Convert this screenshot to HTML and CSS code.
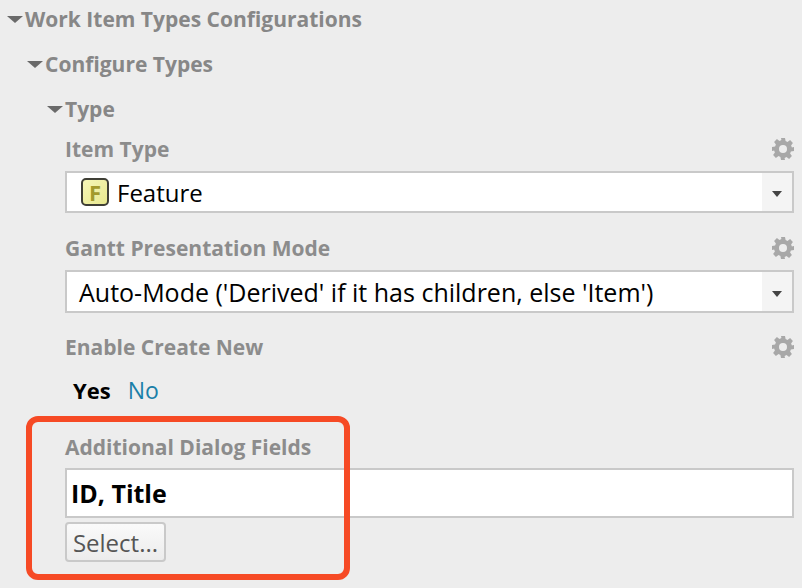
FILE: index.html
```html
<!DOCTYPE html>
<html>

<head>
    <title>Work Item Types Configurations</title>
    <link rel="stylesheet" href="styles.css">
</head>

<body>
    <div class="panel">
        <div class="section level-1"><span class="arrow"></span>Work Item Types Configurations</div>
        <div class="section level-2"><span class="arrow"></span>Configure Types</div>
        <div class="section level-3"><span class="arrow"></span>Type</div>

        <div class="fields">
            <div class="field-head item-head">
                <span class="field-label">Item Type</span>
                <svg class="gear" viewBox="0 0 24 24"><path fill-rule="evenodd" d="M10 1h4l.6 3.1 1.9.8 2.6-1.8 2.8 2.8-1.8 2.6.8 1.9L23 10v4l-3.1.6-.8 1.9 1.8 2.6-2.8 2.8-2.6-1.8-1.9.8L14 23h-4l-.6-3.1-1.9-.8-2.6 1.8-2.8-2.8 1.8-2.6-.8-1.9L1 14v-4l3.1-.6.8-1.9-1.8-2.6 2.8-2.8 2.6 1.8 1.9-.8zM12 8a4 4 0 1 0 0 8 4 4 0 0 0 0-8z"/></svg>
            </div>
            <div class="select item-select">
                <div class="select-value">
                    <span class="type-icon">F</span>
                    <span>Feature</span>
                </div>
                <div class="select-btn"><span class="select-arrow"></span></div>
            </div>

            <div class="field-head gantt-head">
                <span class="field-label">Gantt Presentation Mode</span>
                <svg class="gear" viewBox="0 0 24 24"><path fill-rule="evenodd" d="M10 1h4l.6 3.1 1.9.8 2.6-1.8 2.8 2.8-1.8 2.6.8 1.9L23 10v4l-3.1.6-.8 1.9 1.8 2.6-2.8 2.8-2.6-1.8-1.9.8L14 23h-4l-.6-3.1-1.9-.8-2.6 1.8-2.8-2.8 1.8-2.6-.8-1.9L1 14v-4l3.1-.6.8-1.9-1.8-2.6 2.8-2.8 2.6 1.8 1.9-.8zM12 8a4 4 0 1 0 0 8 4 4 0 0 0 0-8z"/></svg>
            </div>
            <div class="select gantt-select">
                <div class="select-value gantt-value">Auto-Mode ('Derived' if it has children, else 'Item')</div>
                <div class="select-btn"><span class="select-arrow"></span></div>
            </div>

            <div class="field-head enable-head">
                <span class="field-label">Enable Create New</span>
                <svg class="gear" viewBox="0 0 24 24"><path fill-rule="evenodd" d="M10 1h4l.6 3.1 1.9.8 2.6-1.8 2.8 2.8-1.8 2.6.8 1.9L23 10v4l-3.1.6-.8 1.9 1.8 2.6-2.8 2.8-2.6-1.8-1.9.8L14 23h-4l-.6-3.1-1.9-.8-2.6 1.8-2.8-2.8 1.8-2.6-.8-1.9L1 14v-4l3.1-.6.8-1.9-1.8-2.6 2.8-2.8 2.6 1.8 1.9-.8zM12 8a4 4 0 1 0 0 8 4 4 0 0 0 0-8z"/></svg>
            </div>
            <div class="toggle">
                <span class="toggle-on">Yes</span>
                <a class="toggle-off">No</a>
            </div>

            <div class="field-head dialog-head">
                <span class="field-label">Additional Dialog Fields</span>
            </div>
            <div class="text-box">ID, Title</div>
            <button class="select-button">Select...</button>
        </div>

        <div class="highlight"></div>
    </div>
</body>

</html>
```

FILE: styles.css
```css
* {
    box-sizing: border-box;
}

html,
body {
    height: 100%;
}

body {
    margin: 0;
    background-color: #ededed;
    font-family: "Open Sans", Arial, sans-serif;
    overflow: hidden;
}

.panel {
    position: relative;
    height: 588px;
    padding-top: 4px;
}

.section {
    display: flex;
    align-items: center;
    height: 30px;
    margin-bottom: 15px;
    font-size: 21px;
    font-weight: 700;
    color: #878787;
}

.level-1 {
    padding-left: 7px;
}

.level-2 {
    padding-left: 27px;
}

.level-3 {
    padding-left: 47px;
    margin-bottom: 0;
}

.arrow {
    width: 0;
    height: 0;
    margin-right: 2px;
    border-left: 8px solid transparent;
    border-right: 8px solid transparent;
    border-top: 7px solid #6a6a6a;
}

.fields {
    padding: 0 8px 0 65px;
}

.field-head {
    display: flex;
    align-items: center;
    justify-content: space-between;
    height: 30px;
}

.item-head {
    margin-top: 10px;
}

.gantt-head {
    margin-top: 20px;
}

.enable-head {
    margin-top: 19px;
}

.dialog-head {
    margin-top: 27px;
}

.field-label {
    font-size: 21px;
    font-weight: 700;
    color: #8c8c8c;
}

.gear {
    width: 24px;
    height: 24px;
    margin-right: -1px;
    fill: #a8a8a8;
}

.select {
    display: flex;
    height: 43px;
    margin-top: 6px;
    border: 2px solid #c9c9c9;
    background-color: #fff;
}

.item-select {
    height: 42px;
    margin-top: 7px;
}

.gantt-select {
    margin-top: 7px;
}

.select-value {
    display: flex;
    flex: 1;
    align-items: center;
    padding-left: 14px;
    font-size: 24px;
    color: #000;
}

.gantt-value {
    padding-left: 12px;
    font-size: 25px;
}

.type-icon {
    display: flex;
    align-items: center;
    justify-content: center;
    width: 28px;
    height: 28px;
    margin-right: 8px;
    border: 2px solid #3f3f36;
    border-radius: 5px;
    background: linear-gradient(135deg, #f6f6b8, #e8e88e);
    font-size: 22px;
    font-weight: 700;
    color: #a39a2c;
}

.select-btn {
    display: flex;
    align-items: center;
    justify-content: center;
    width: 30px;
    background-color: #f4f4f4;
}

.select-arrow {
    width: 0;
    height: 0;
    margin-top: 4px;
    border-left: 5px solid transparent;
    border-right: 5px solid transparent;
    border-top: 6px solid #444;
}

.toggle {
    display: flex;
    gap: 17px;
    margin-top: 13px;
    padding-left: 8px;
    font-size: 22px;
    line-height: 30px;
}

.toggle-on {
    font-weight: 700;
    color: #000;
}

.toggle-off {
    font-size: 23px;
    color: #1a7fa8;
}

.text-box {
    display: flex;
    align-items: center;
    height: 50px;
    margin-top: 6px;
    padding-left: 4px;
    border: 2px solid #c9c9c9;
    background-color: #fff;
    font-size: 25px;
    font-weight: 700;
    color: #000;
}

.select-button {
    display: block;
    width: 101px;
    height: 40px;
    margin-top: 4px;
    padding: 0;
    border: 2px solid #c9c9c9;
    border-radius: 4px;
    background: linear-gradient(#fafafa, #ececec);
    font-family: inherit;
    font-size: 24px;
    color: #555;
}

/* annotation drawn over the screenshot */
.highlight {
    position: absolute;
    left: 26px;
    top: 416px;
    width: 324px;
    height: 164px;
    border: 6px solid #f64a25;
    border-radius: 12px;
}
```
